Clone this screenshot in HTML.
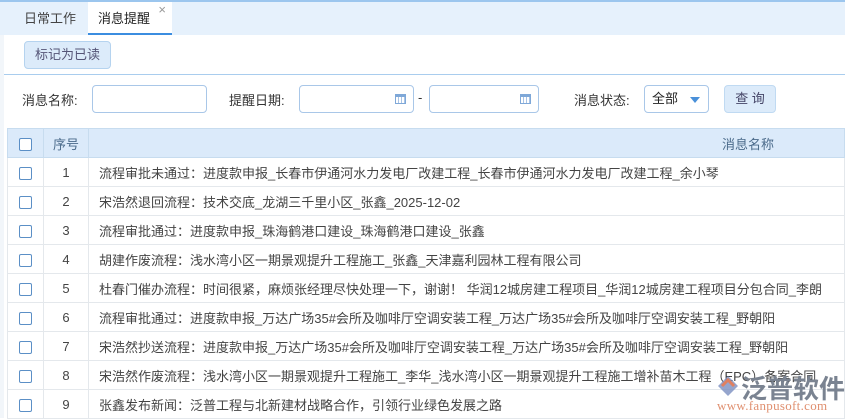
<!DOCTYPE html><html><head><meta charset="utf-8"><style>
*{box-sizing:border-box;margin:0;padding:0}
body{width:845px;height:418px;overflow:hidden;background:#fff;font-family:"Liberation Sans","Noto Sans CJK SC",sans-serif;font-size:13px;color:#333;position:relative}
.top{position:absolute;left:0;top:0;width:845px;height:35px;background:#e6f1fc;border-top:2px solid #9cc6ee}
.tab{position:absolute;top:0;height:33px;line-height:33px;font-size:13px}
.t1{left:24px;color:#444}
.t2{left:88px;width:84px;background:#fff;border-bottom:2px solid #3b8de0;padding-left:10px;color:#222}
.t2 span{position:absolute;right:6px;top:-9px;color:#999;font-size:13px}
.lft{position:absolute;left:0;top:35px;width:4px;height:383px;background:#f2f6fa}
.btn{position:absolute;left:24px;top:41px;width:87px;height:28px;border:1px solid #b5d3ef;background:#dcebfa;border-radius:4px;text-align:center;line-height:26px;color:#557;}
.hl{position:absolute;left:4px;top:74px;width:841px;height:1px;background:#a9cdee}
.lbl{position:absolute;top:90px;font-size:13px;color:#333}
.inp{position:absolute;top:85px;height:28px;border:1px solid #a9c7e8;border-radius:4px;background:#fff}
.cal{position:absolute;right:7px;top:8px;width:11px;height:10px;border:1px solid #7fa8d8;border-top:3px solid #7fa8d8;background:repeating-linear-gradient(90deg,#fff 0 2px,#a9c4e6 2px 3px)}
.qb{position:absolute;left:724px;top:85px;width:52px;height:28px;background:#dcebfa;border:1px solid #c0daf2;border-radius:4px;text-align:center;line-height:26px;color:#446}
table{position:absolute;left:7px;top:128px;width:838px;border-collapse:collapse}
th{height:29px;background:#dbeafa;border:1px solid #c7dcef;font-weight:normal;color:#4a6a8a;font-size:13px}
td{height:29px;border:1px solid #e4e8ec;font-size:13px;color:#444;white-space:nowrap;overflow:hidden}
td.c,th.c{width:36px;text-align:center}
td.n,th.n{width:45px;text-align:center}
td.m{padding-left:10px}
.cb{display:inline-block;width:13px;height:13px;border:1px solid #5b8fc6;border-radius:2px;vertical-align:middle;background:#fff}
.wm{position:absolute;left:741px;top:369px;color:#7a8391;font-size:26px;font-weight:bold;letter-spacing:0px}
.wm2{position:absolute;left:717px;top:398px;color:#e09070;font-size:13px;font-family:"Liberation Serif",serif;letter-spacing:0.3px}
</style></head><body>
<div class="top"><div class="tab t1">日常工作</div><div class="tab t2">消息提醒<span>×</span></div></div>
<div class="lft"></div>
<div class="btn">标记为已读</div>
<div class="hl"></div>
<div class="lbl" style="left:22px">消息名称:</div>
<div class="inp" style="left:92px;width:115px"></div>
<div class="lbl" style="left:229px">提醒日期:</div>
<div class="inp" style="left:299px;width:115px"><div class="cal"></div></div>
<div class="lbl" style="left:418px">-</div>
<div class="inp" style="left:429px;width:110px"><div class="cal"></div></div>
<div class="lbl" style="left:574px">消息状态:</div>
<div class="inp" style="left:644px;width:65px;padding-left:7px;line-height:26px;color:#222">全部<span style="position:absolute;right:8px;top:11px;border:5px solid transparent;border-top:6px solid #4a90d9"></span></div>
<div class="qb">查 询</div>
<table>
<tr><th class="c"><span class="cb"></span></th><th class="n">序号</th><th style="text-align:right;padding-right:70px">消息名称</th></tr>
<tr><td class="c"><span class="cb"></span></td><td class="n">1</td><td class="m">流程审批未通过：进度款申报_长春市伊通河水力发电厂改建工程_长春市伊通河水力发电厂改建工程_余小琴</td></tr>
<tr><td class="c"><span class="cb"></span></td><td class="n">2</td><td class="m">宋浩然退回流程：技术交底_龙湖三千里小区_张鑫_2025-12-02</td></tr>
<tr><td class="c"><span class="cb"></span></td><td class="n">3</td><td class="m">流程审批通过：进度款申报_珠海鹤港口建设_珠海鹤港口建设_张鑫</td></tr>
<tr><td class="c"><span class="cb"></span></td><td class="n">4</td><td class="m">胡建作废流程：浅水湾小区一期景观提升工程施工_张鑫_天津嘉利园林工程有限公司</td></tr>
<tr><td class="c"><span class="cb"></span></td><td class="n">5</td><td class="m">杜春门催办流程：时间很紧，麻烦张经理尽快处理一下，谢谢！ 华润12城房建工程项目_华润12城房建工程项目分包合同_李朗</td></tr>
<tr><td class="c"><span class="cb"></span></td><td class="n">6</td><td class="m">流程审批通过：进度款申报_万达广场35#会所及咖啡厅空调安装工程_万达广场35#会所及咖啡厅空调安装工程_野朝阳</td></tr>
<tr><td class="c"><span class="cb"></span></td><td class="n">7</td><td class="m">宋浩然抄送流程：进度款申报_万达广场35#会所及咖啡厅空调安装工程_万达广场35#会所及咖啡厅空调安装工程_野朝阳</td></tr>
<tr><td class="c"><span class="cb"></span></td><td class="n">8</td><td class="m">宋浩然作废流程：浅水湾小区一期景观提升工程施工_李华_浅水湾小区一期景观提升工程施工增补苗木工程（EPC）备案合同</td></tr>
<tr><td class="c"><span class="cb"></span></td><td class="n">9</td><td class="m">张鑫发布新闻：泛普工程与北新建材战略合作，引领行业绿色发展之路</td></tr>
</table>
<svg style="position:absolute;left:716px;top:374px" width="24" height="24"><path d="M12 2 L22 12 L12 22 L2 12Z" fill="#7a8ec0" opacity=".8"/><path d="M6 12 L12 6 L18 12" fill="none" stroke="#e08060" stroke-width="3"/></svg>
<div class="wm">泛普软件</div>
<div class="wm2">www.fanpusoft.com</div>
</body></html>
